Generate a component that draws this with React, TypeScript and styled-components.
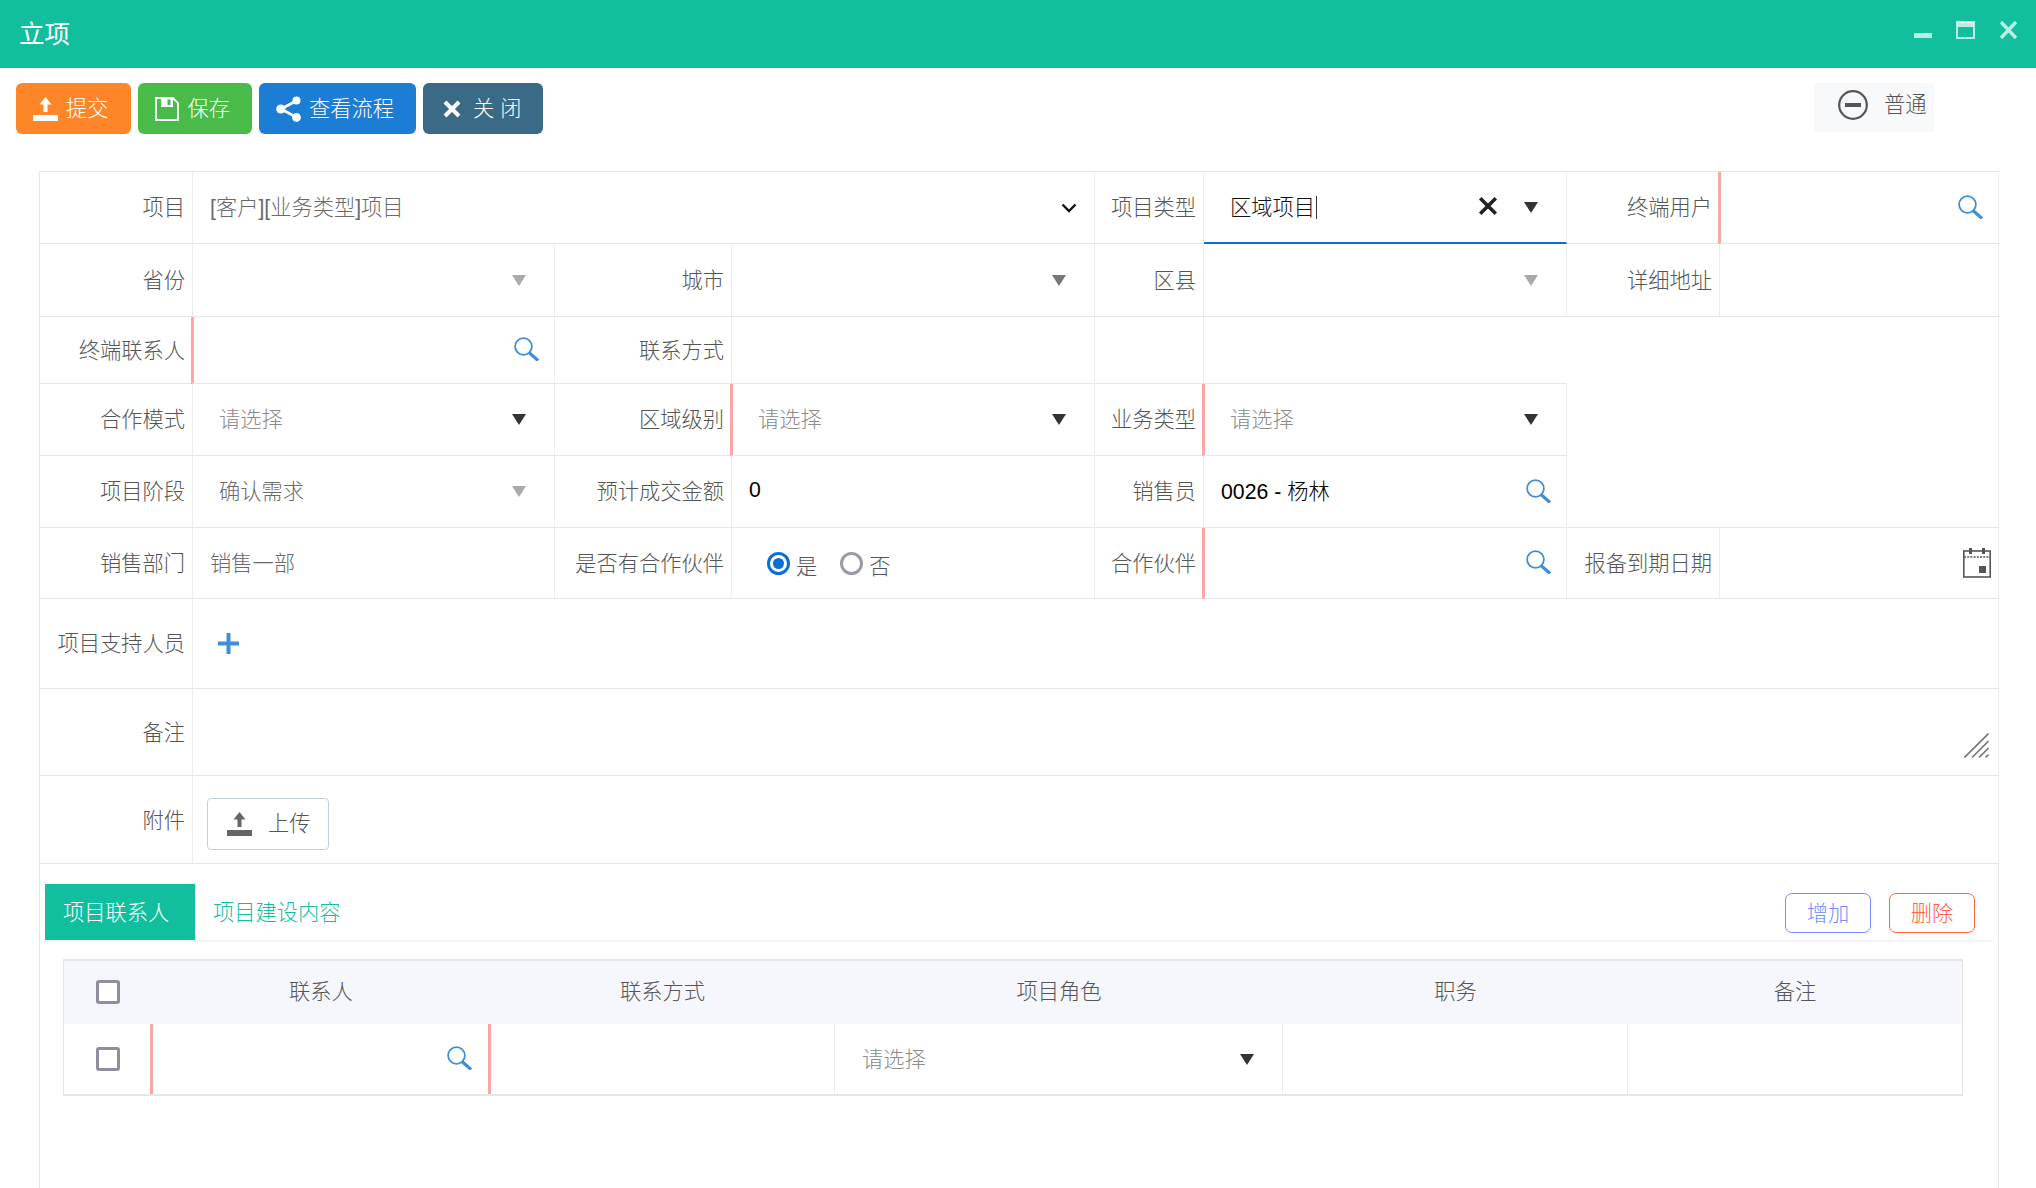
import React from "react";
import styled, { createGlobalStyle } from "styled-components";

const Global = createGlobalStyle`
  html, body { margin: 0; padding: 0; background: #fff; }
  body { font-family: "Liberation Sans", "Noto Sans CJK SC", sans-serif; font-size: 21.25px; font-weight: 300; color: #555; }
  * { box-sizing: border-box; }
`;

const Page = styled.div`
  width: 2036px;
  height: 1188px;
  overflow: hidden;
  display: flex;
  flex-direction: column;
`;

const TitleBar = styled.header`
  height: 68px;
  flex: none;
  background: #11bf9e;
  display: flex;
  align-items: center;
  justify-content: space-between;
  padding: 0 18px 0 19px;
`;
const Title = styled.h1`
  margin: 0 0 6px;
  font-size: 25.5px;
  font-weight: 400;
  color: #fff;
`;
const WindowControls = styled.div`
  display: flex;
  gap: 24px;
  padding-bottom: 8px;
  color: rgba(255, 255, 255, 0.72);
`;

const Toolbar = styled.div`
  height: 103px;
  flex: none;
  padding: 15px 102px 0 16px;
  display: flex;
  align-items: flex-start;
  gap: 7px;
`;
const ActionButton = styled.button<{ $bg: string; $gap?: number }>`
  height: 51px;
  padding: 0 22px 0 17px;
  border: 0;
  border-radius: 6px;
  background: ${(p) => p.$bg};
  color: #fff;
  font: inherit;
  display: flex;
  align-items: center;
  gap: ${(p) => p.$gap ?? 8}px;
  white-space: pre;
`;
const ButtonText = styled.span`
  margin-bottom: 5px;
`;
const CloseSlot = styled.span`
  display: flex;
  margin: 0 4px 0 3px;
`;
const Priority = styled.div`
  margin-left: auto;
  width: 120px;
  height: 49px;
  background: #f8f9fb;
  padding: 0 0 5px 24px;
  display: flex;
  align-items: center;
  gap: 16px;
`;

const Panel = styled.main`
  flex: 1;
  width: 1960px;
  margin-left: 39px;
  border-left: 1px solid #e6e6e6;
  border-right: 1px solid #e6e6e6;
`;

const FormGrid = styled.div`
  display: grid;
  width: 1959px;
  border-top: 1px solid #e6e6e6;
  grid-template-columns: 153px 362px 177px 363px 109px 363px 153px 279px;
  grid-template-rows: 72px 73px 67px 72px 72px 71px 90px 87px 88px;
`;
const Cell = styled.div<{ $span?: number; $rows?: number; $open?: boolean }>`
  grid-column: span ${(p) => p.$span ?? 1};
  grid-row: span ${(p) => p.$rows ?? 1};
  border-bottom: 1px solid #e6e6e6;
  border-right: 1px solid ${(p) => (p.$open ? "transparent" : "#ececec")};
  display: flex;
  align-items: center;
  min-width: 0;
`;
const Label = styled(Cell)<{ $raise?: number }>`
  justify-content: flex-end;
  padding: 0 7px ${(p) => p.$raise ?? 4}px 0;
  white-space: nowrap;
`;
const Field = styled(Cell)<{ $req?: boolean; $pad?: number; $focus?: boolean }>`
  padding-left: ${(p) => p.$pad ?? 17}px;
  ${(p) => p.$req && `border-left: 3px solid #f9a6a6; margin-left: -2px;`}
  ${(p) => p.$focus && `border-bottom: 2px solid #0b6fd6;`}
`;
const FieldText = styled.span<{ $tone?: "value" | "muted" | "hint" | "strong" }>`
  padding-bottom: 4px;
  white-space: pre;
  color: ${(p) =>
    p.$tone === "strong" ? "#111" : p.$tone === "value" ? "#000" : p.$tone === "hint" ? "#8c8c8c" : "#6a6a6a"};
`;
const ZeroText = styled(FieldText)`
  padding-bottom: 2px;
`;
const Caret = styled.span`
  display: inline-block;
  width: 1px;
  height: 23px;
  margin-left: 1px;
  background: #333;
  vertical-align: -4px;
`;
const FieldIcon = styled.span<{ $right: number; $free?: boolean; $lift?: number }>`
  display: flex;
  margin-left: ${(p) => (p.$free ? "0" : "auto")};
  margin-right: ${(p) => p.$right}px;
  margin-bottom: ${(p) => p.$lift ?? 0}px;
`;
const ResizeIcon = styled(FieldIcon)`
  align-self: flex-end;
  margin-bottom: 17px;
`;

const RadioGroup = styled.div`
  display: flex;
  align-items: center;
`;
const Radio = styled.span<{ $on?: boolean }>`
  width: 23px;
  height: 23px;
  border-radius: 50%;
  border: 3px solid ${(p) => (p.$on ? "#0b6fd6" : "#9a9aa8")};
  display: flex;
  align-items: center;
  justify-content: center;
  &::after {
    content: "";
    width: 11px;
    height: 11px;
    border-radius: 50%;
    background: ${(p) => (p.$on ? "#0b6fd6" : "transparent")};
  }
`;
const RadioText = styled.span<{ $gap: number }>`
  margin: 2px ${(p) => p.$gap}px 0 6px;
`;

const UploadButton = styled.button`
  width: 122px;
  height: 52px;
  margin-top: 8px;
  border: 1px solid #c5d0de;
  border-radius: 4px;
  background: #fff;
  color: #555;
  font: inherit;
  padding: 0 0 0 19px;
  display: flex;
  align-items: center;
  gap: 16px;
`;

const TabBar = styled.div`
  margin: 20px 4px 0 5px;
  height: 58px;
  border-bottom: 2px solid #f2f4f8;
  display: flex;
  align-items: flex-start;
`;
const Tab = styled.div<{ $active?: boolean }>`
  width: ${(p) => (p.$active ? "150px" : "auto")};
  height: 56px;
  padding: 0 0 4px 18px;
  display: flex;
  align-items: center;
  background: ${(p) => (p.$active ? "#11bf9e" : "transparent")};
  color: ${(p) => (p.$active ? "#fff" : "#11bf9e")};
`;
const TabActions = styled.div`
  margin: 9px 19px 0 auto;
  display: flex;
  gap: 18px;
`;
const OutlineButton = styled.button<{ $color: string }>`
  width: 86px;
  height: 40px;
  padding: 0 0 4px;
  border: 1.5px solid ${(p) => p.$color};
  border-radius: 7px;
  background: #fff;
  color: ${(p) => p.$color};
  font: inherit;
`;

const Table = styled.div`
  width: 1900px;
  margin: 17px 0 0 23px;
  border: 1px solid #e6e6e6;
  border-top-width: 2px;
  border-bottom-width: 2px;
  display: grid;
  grid-template-columns: 88px 338px 345px 448px 345px 334px;
  grid-template-rows: 63px 70px;
`;
const HeadCell = styled.div<{ $raise?: number }>`
  background: #f6f7fc;
  display: flex;
  align-items: center;
  justify-content: center;
  padding-bottom: ${(p) => p.$raise ?? 6}px;
`;
const BodyCell = styled.div<{ $req?: boolean; $center?: boolean; $last?: boolean }>`
  display: flex;
  align-items: center;
  justify-content: ${(p) => (p.$center ? "center" : "flex-start")};
  border-right: 1px solid ${(p) => (p.$last ? "transparent" : "#ececec")};
  ${(p) => p.$req && `border-left: 3px solid #f9a6a6; margin-left: -2px;`}
  ${(p) => p.$center && `border-right: 0;`}
`;
const BodyPad = styled.span`
  padding-left: 27px;
  display: flex;
  flex: 1;
  align-items: center;
`;
const Check = styled.span`
  width: 24px;
  height: 24px;
  border: 3px solid #8e8e9e;
  border-radius: 3px;
  background: #fff;
`;

const Triangle = ({ tone = "#333" }: { tone?: string }) => (
  <svg width="14" height="11" viewBox="0 0 14 11">
    <polygon points="0,0 14,0 7,11" fill={tone} />
  </svg>
);
const SearchIcon = () => (
  <svg width="25" height="24" viewBox="0 0 25 24" fill="none">
    <circle cx="9.5" cy="9.5" r="8.4" stroke="#3f8fd8" strokeWidth="1.8" />
    <path d="M15 15.5 L24 23.5" stroke="#3f8fd8" strokeWidth="3.2" />
  </svg>
);
const UploadIcon = ({ color }: { color: string }) => (
  <svg width="25" height="24" viewBox="0 0 25 24">
    <polygon points="12.5,0 18.5,7.5 14.5,7.5 14.5,15 10.5,15 10.5,7.5 6.5,7.5" fill={color} />
    <rect x="0" y="18" width="25" height="6" fill={color} />
  </svg>
);
const SaveIcon = () => (
  <svg width="24" height="24" viewBox="0 0 24 24" fill="none">
    <path d="M1 1 H18 L23 6 V23 H1 Z" stroke="#fff" strokeWidth="1.8" />
    <path d="M6 1 H18 V10 H6 Z" fill="#fff" />
    <rect x="12.5" y="2.5" width="3" height="5.5" fill="#48bb48" />
  </svg>
);
const ShareIcon = () => (
  <svg width="25" height="26" viewBox="0 0 25 26" fill="#fff" stroke="#fff">
    <path d="M20 5 L5 13 L20 21" fill="none" strokeWidth="2.6" />
    <circle cx="20.5" cy="4.5" r="4" strokeWidth="0" />
    <circle cx="4.8" cy="13" r="4.6" strokeWidth="0" />
    <circle cx="20.5" cy="21.5" r="4.4" strokeWidth="0" />
  </svg>
);
const CloseIcon = ({ size, color, weight }: { size: number; color: string; weight: number }) => (
  <svg width={size} height={size} viewBox="0 0 18 18" fill="none">
    <path d="M2 2 L16 16 M16 2 L2 16" stroke={color} strokeWidth={weight} />
  </svg>
);
const CalendarIcon = () => (
  <svg width="28" height="30" viewBox="0 0 28 30" fill="none">
    <rect x="0.8" y="3" width="26.4" height="26" stroke="#555" strokeWidth="1.6" fill="#fff" />
    <path d="M1 9 H27" stroke="#555" strokeWidth="1.6" strokeDasharray="2 1.2" />
    <rect x="6" y="0" width="3" height="6" fill="#555" />
    <rect x="19" y="0" width="3" height="6" fill="#555" />
    <rect x="16" y="18" width="7" height="7" fill="#555" />
  </svg>
);
const ResizeHatch = () => (
  <svg width="25" height="25" viewBox="0 0 25 25" fill="none" stroke="#777" strokeWidth="1.6">
    <path d="M0.5 24.5 L24.5 0.5 M8 24.5 L24.5 8 M15 24.5 L24.5 15 M21.5 24.5 L24.5 21.5" />
  </svg>
);

const Select = ({ tone }: { tone?: string }) => (
  <FieldIcon $right={28}>
    <Triangle tone={tone} />
  </FieldIcon>
);
const Lookup = () => (
  <FieldIcon $right={15} $lift={2}>
    <SearchIcon />
  </FieldIcon>
);

export default function App() {
  return (
    <Page>
      <Global />
      <TitleBar>
        <Title>立项</Title>
        <WindowControls>
          <svg width="19" height="18" viewBox="0 0 19 18">
            <rect x="1" y="12" width="19" height="5" fill="currentColor" />
          </svg>
          <svg width="19" height="18" viewBox="0 0 19 18" fill="none">
            <rect x="1" y="1" width="17" height="16" stroke="currentColor" strokeWidth="2" />
            <rect x="1" y="1" width="17" height="5" fill="currentColor" />
          </svg>
          <svg width="19" height="18" viewBox="0 0 19 18" fill="none">
            <path d="M2 1 L17 17 M17 1 L2 17" stroke="currentColor" strokeWidth="3.4" />
          </svg>
        </WindowControls>
      </TitleBar>

      <Toolbar>
        <ActionButton $bg="#ff8628">
          <UploadIcon color="#fff" />
          <ButtonText>提交</ButtonText>
        </ActionButton>
        <ActionButton $bg="#48bb48" $gap={9}>
          <SaveIcon />
          <ButtonText>保存</ButtonText>
        </ActionButton>
        <ActionButton $bg="#1b7dd3">
          <ShareIcon />
          <ButtonText>查看流程</ButtonText>
        </ActionButton>
        <ActionButton $bg="#3a6a86">
          <CloseSlot>
            <CloseIcon size={18} color="#fff" weight={4} />
          </CloseSlot>
          <ButtonText>关 闭</ButtonText>
        </ActionButton>
        <Priority>
          <svg width="30" height="30" viewBox="0 0 30 30" fill="none">
            <circle cx="15" cy="15" r="13.8" stroke="#555" strokeWidth="2.2" />
            <rect x="7" y="13" width="16" height="4" fill="#555" />
          </svg>
          <ButtonText>普通</ButtonText>
        </Priority>
      </Toolbar>

      <Panel>
        <FormGrid>
          <Label>项目</Label>
          <Field $span={3}>
            <FieldText>[客户][业务类型]项目</FieldText>
            <FieldIcon $right={17}>
              <svg width="16" height="10" viewBox="0 0 16 10" fill="none">
                <path d="M1.5 1.5 L8 8 L14.5 1.5" stroke="#111" strokeWidth="2.4" />
              </svg>
            </FieldIcon>
          </Field>
          <Label>项目类型</Label>
          <Field $pad={26} $focus>
            <FieldText $tone="strong">
              区域项目
              <Caret />
            </FieldText>
            <FieldIcon $right={26} $lift={2}>
              <CloseIcon size={20} color="#222" weight={3.2} />
            </FieldIcon>
            <FieldIcon $right={28} $free>
              <Triangle />
            </FieldIcon>
          </Field>
          <Label>终端用户</Label>
          <Field $req>
            <Lookup />
          </Field>

          <Label>省份</Label>
          <Field>
            <Select tone="#aaa" />
          </Field>
          <Label>城市</Label>
          <Field>
            <Select tone="#777" />
          </Field>
          <Label>区县</Label>
          <Field>
            <Select tone="#aaa" />
          </Field>
          <Label>详细地址</Label>
          <Field />

          <Label>终端联系人</Label>
          <Field $req>
            <Lookup />
          </Field>
          <Label>联系方式</Label>
          <Field />
          <Label />
          <Field $open />
          <Cell $span={2} $rows={3} />

          <Label>合作模式</Label>
          <Field $pad={26}>
            <FieldText $tone="hint">请选择</FieldText>
            <Select />
          </Field>
          <Label>区域级别</Label>
          <Field $req $pad={25}>
            <FieldText $tone="hint">请选择</FieldText>
            <Select />
          </Field>
          <Label>业务类型</Label>
          <Field $req $pad={25}>
            <FieldText $tone="hint">请选择</FieldText>
            <Select />
          </Field>

          <Label>项目阶段</Label>
          <Field $pad={26}>
            <FieldText>确认需求</FieldText>
            <Select tone="#aaa" />
          </Field>
          <Label>预计成交金额</Label>
          <Field>
            <ZeroText $tone="value">0</ZeroText>
          </Field>
          <Label>销售员</Label>
          <Field>
            <FieldText $tone="value">0026 - 杨林</FieldText>
            <Lookup />
          </Field>

          <Label>销售部门</Label>
          <Field>
            <FieldText>销售一部</FieldText>
          </Field>
          <Label>是否有合作伙伴</Label>
          <Field $pad={35}>
            <RadioGroup>
              <Radio $on />
              <RadioText $gap={23}>是</RadioText>
              <Radio />
              <RadioText $gap={0}>否</RadioText>
            </RadioGroup>
          </Field>
          <Label>合作伙伴</Label>
          <Field $req>
            <Lookup />
          </Field>
          <Label>报备到期日期</Label>
          <Field>
            <FieldIcon $right={7}>
              <CalendarIcon />
            </FieldIcon>
          </Field>

          <Label>项目支持人员</Label>
          <Field $span={7} $pad={25}>
            <svg width="21" height="21" viewBox="0 0 21 21">
              <path d="M8.5 0 H12.5 V8.5 H21 V12.5 H12.5 V21 H8.5 V12.5 H0 V8.5 H8.5 Z" fill="#3f8fd8" />
            </svg>
          </Field>

          <Label>备注</Label>
          <Field $span={7}>
            <ResizeIcon $right={9}>
              <ResizeHatch />
            </ResizeIcon>
          </Field>

          <Label $raise={2}>附件</Label>
          <Field $span={7} $pad={14}>
            <UploadButton>
              <UploadIcon color="#666" />
              <ButtonText>上传</ButtonText>
            </UploadButton>
          </Field>
        </FormGrid>

        <TabBar>
          <Tab $active>项目联系人</Tab>
          <Tab>项目建设内容</Tab>
          <TabActions>
            <OutlineButton $color="#6f8fff">增加</OutlineButton>
            <OutlineButton $color="#ff6244">删除</OutlineButton>
          </TabActions>
        </TabBar>

        <Table>
          <HeadCell $raise={1}>
            <Check />
          </HeadCell>
          <HeadCell>联系人</HeadCell>
          <HeadCell>联系方式</HeadCell>
          <HeadCell>项目角色</HeadCell>
          <HeadCell>职务</HeadCell>
          <HeadCell>备注</HeadCell>

          <BodyCell $center>
            <Check />
          </BodyCell>
          <BodyCell $req>
            <BodyPad>
              <FieldIcon $right={17} $lift={2}>
                <SearchIcon />
              </FieldIcon>
            </BodyPad>
          </BodyCell>
          <BodyCell $req />
          <BodyCell>
            <BodyPad>
              <FieldText $tone="hint">请选择</FieldText>
              <FieldIcon $right={28}>
                <Triangle />
              </FieldIcon>
            </BodyPad>
          </BodyCell>
          <BodyCell />
          <BodyCell $last />
        </Table>
      </Panel>
    </Page>
  );
}
